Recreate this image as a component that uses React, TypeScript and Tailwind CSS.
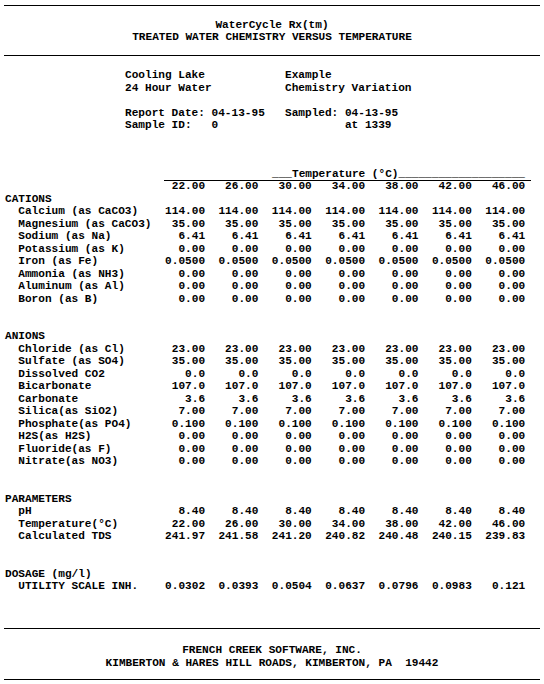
// WaterCycle Rx report: treated water chemistry vs temperature

type Row = { label: string; values: string[] };
type Section = { title: string; rows: Row[] };

const TEMPS = ["22.00", "26.00", "30.00", "34.00", "38.00", "42.00", "46.00"];

const same = (v: string) => Array(7).fill(v);

const SECTIONS: Section[] = [
  {
    title: "CATIONS",
    rows: [
      { label: "Calcium (as CaCO3)", values: same("114.00") },
      { label: "Magnesium (as CaCO3)", values: same("35.00") },
      { label: "Sodium (as Na)", values: same("6.41") },
      { label: "Potassium (as K)", values: same("0.00") },
      { label: "Iron (as Fe)", values: same("0.0500") },
      { label: "Ammonia (as NH3)", values: same("0.00") },
      { label: "Aluminum (as Al)", values: same("0.00") },
      { label: "Boron (as B)", values: same("0.00") },
    ],
  },
  {
    title: "ANIONS",
    rows: [
      { label: "Chloride (as Cl)", values: same("23.00") },
      { label: "Sulfate (as SO4)", values: same("35.00") },
      { label: "Dissolved CO2", values: same("0.0") },
      { label: "Bicarbonate", values: same("107.0") },
      { label: "Carbonate", values: same("3.6") },
      { label: "Silica(as SiO2)", values: same("7.00") },
      { label: "Phosphate(as PO4)", values: same("0.100") },
      { label: "H2S(as H2S)", values: same("0.00") },
      { label: "Fluoride(as F)", values: same("0.00") },
      { label: "Nitrate(as NO3)", values: same("0.00") },
    ],
  },
  {
    title: "PARAMETERS",
    rows: [
      { label: "pH", values: same("8.40") },
      { label: "Temperature(°C)", values: TEMPS },
      {
        label: "Calculated TDS",
        values: ["241.97", "241.58", "241.20", "240.82", "240.48", "240.15", "239.83"],
      },
    ],
  },
  {
    title: "DOSAGE (mg/l)",
    rows: [
      {
        label: "UTILITY SCALE INH.",
        values: ["0.0302", "0.0393", "0.0504", "0.0637", "0.0796", "0.0983", "0.121"],
      },
    ],
  },
];

function Rule() {
  return <div className="mx-[4px] h-px bg-black" />;
}

function DataRow({ label, values }: Row) {
  return (
    <div className="grid grid-cols-[146.7px_repeat(7,53.36px)]">
      <div className="pl-[13.3px] whitespace-pre">{label}</div>
      {values.map((v, i) => (
        <div key={i} className="text-right">
          {v}
        </div>
      ))}
    </div>
  );
}

export default function App() {
  return (
    <div className="w-[544px] h-[684px] bg-white text-black font-bold text-[11.1px] leading-[12.5px] font-['Liberation_Mono',monospace] pt-[5px]">
      <Rule />

      {/* Title */}
      <div className="mt-[12.5px] text-center">
        <div>WaterCycle Rx(tm)</div>
        <div>TREATED WATER CHEMISTRY VERSUS TEMPERATURE</div>
      </div>

      <div className="mt-[11.5px]">
        <Rule />
      </div>

      {/* Sample info */}
      <div className="mt-[13.4px] pl-[125px] grid grid-cols-[160px_auto] whitespace-pre">
        <div>Cooling Lake</div>
        <div>Example</div>
        <div>24 Hour Water</div>
        <div>Chemistry Variation</div>
        <div className="col-span-2">&nbsp;</div>
        <div>Report Date: 04-13-95</div>
        <div>Sampled: 04-13-95</div>
        <div>Sample ID:   0</div>
        <div>         at 1339</div>
      </div>

      {/* Table */}
      <div className="mt-[36px] pl-[5px]">
        <div className="pl-[267px] whitespace-pre">___Temperature (°C)___________________</div>
        <div className="ml-[159px] w-[367px] h-px bg-black" />
        <div className="leading-[11.5px]">
          <DataRow label="" values={TEMPS} />
        </div>

        {SECTIONS.map((s, si) => (
          <div key={s.title} className={si > 0 ? "mt-[25px]" : ""}>
            <div>{s.title}</div>
            {s.rows.map((r) => (
              <DataRow key={r.label} label={r.label} values={r.values} />
            ))}
          </div>
        ))}
      </div>

      {/* Footer */}
      <div className="mt-[35px]">
        <Rule />
      </div>
      <div className="mt-[15.4px] text-center whitespace-pre">
        <div>FRENCH CREEK SOFTWARE, INC.</div>
        <div>KIMBERTON &amp; HARES HILL ROADS, KIMBERTON, PA  19442</div>
      </div>
      <div className="mt-[9.6px]">
        <Rule />
      </div>
    </div>
  );
}
